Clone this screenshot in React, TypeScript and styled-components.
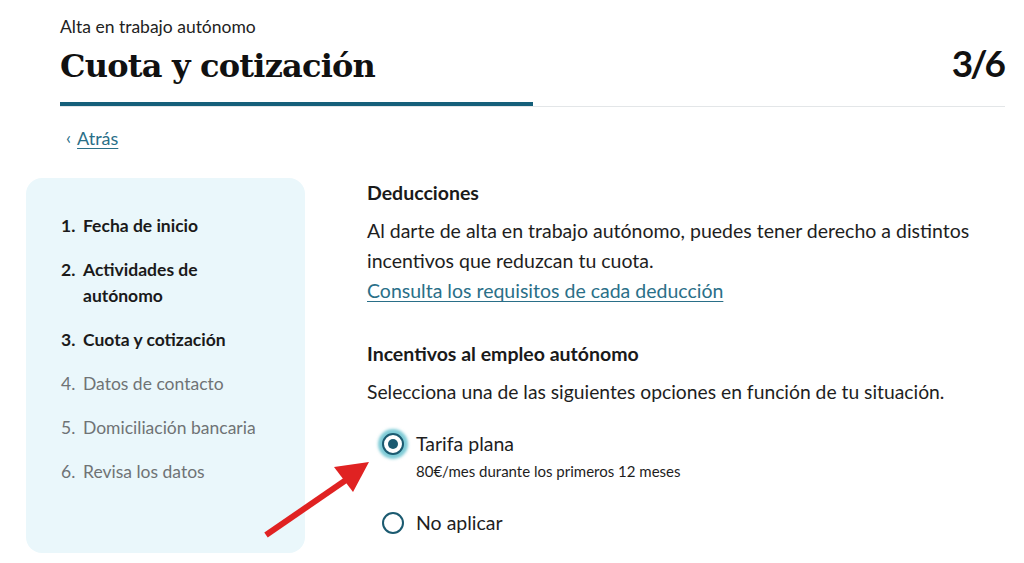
import styled, { createGlobalStyle } from "styled-components";

const GlobalStyle = createGlobalStyle`
  * { box-sizing: border-box; }
  body {
    margin: 0;
    background: #ffffff;
    font-family: Lato, "Open Sans", sans-serif;
    color: #1a1a1a;
  }
`;

const steps = [
  { n: 1, label: "Fecha de inicio", done: true },
  { n: 2, label: "Actividades de autónomo", done: true },
  { n: 3, label: "Cuota y cotización", done: true },
  { n: 4, label: "Datos de contacto", done: false },
  { n: 5, label: "Domiciliación bancaria", done: false },
  { n: 6, label: "Revisa los datos", done: false },
];

export default function App() {
  return (
    <Page>
      <GlobalStyle />
      <Header>
        <Eyebrow>Alta en trabajo autónomo</Eyebrow>
        <TitleRow>
          <Title>Cuota y cotización</Title>
          <Counter>3/6</Counter>
        </TitleRow>
        <Progress>
          <ProgressFill style={{ width: `${(3 / 6) * 100}%` }} />
        </Progress>
      </Header>

      <BackLink href="#">
        <Chevron>‹</Chevron>
        <span>Atrás</span>
      </BackLink>

      <Body>
        <Sidebar>
          <StepList>
            {steps.map((s) => (
              <Step key={s.n} $done={s.done}>
                <StepNum>{s.n}.</StepNum>
                <StepLabel $wrap={s.n === 2}>{s.label}</StepLabel>
              </Step>
            ))}
          </StepList>
        </Sidebar>

        <Content>
          <SectionTitle>Deducciones</SectionTitle>
          <Paragraph>
            Al darte de alta en trabajo autónomo, puedes tener derecho a distintos
            incentivos que reduzcan tu cuota.
            <br />
            <TextLink href="#">Consulta los requisitos de cada deducción</TextLink>
          </Paragraph>

          <SectionTitle $spaced>Incentivos al empleo autónomo</SectionTitle>
          <Paragraph $tight>
            Selecciona una de las siguientes opciones en función de tu situación.
          </Paragraph>

          <Options>
            <Option>
              <Radio $checked />
              <OptionText>
                <OptionLabel>Tarifa plana</OptionLabel>
                <OptionHint>80€/mes durante los primeros 12 meses</OptionHint>
              </OptionText>
            </Option>
            <Option>
              <Radio />
              <OptionText>
                <OptionLabel>No aplicar</OptionLabel>
              </OptionText>
            </Option>
          </Options>
        </Content>
      </Body>

      <Arrow width="120" height="90" viewBox="0 0 120 90">
        <line x1="6" y1="87" x2="86" y2="32" stroke="#e02222" strokeWidth="6" />
        <polygon points="109,14 74,19 93,44" fill="#e02222" />
      </Arrow>
    </Page>
  );
}

const Page = styled.div`
  position: relative;
  width: 1024px;
  height: 563px;
  padding: 16px 19px 0 26px;
  overflow: hidden;
`;

const Header = styled.header`
  margin-left: 34px;
`;

const Eyebrow = styled.div`
  font-size: 17.5px;
  line-height: 22px;
  color: #222;
`;

const TitleRow = styled.div`
  display: flex;
  justify-content: space-between;
  align-items: baseline;
  margin-top: 3px;
`;

const Title = styled.h1`
  margin: 0;
  font-family: "DejaVu Serif", "Liberation Serif", serif;
  font-weight: 700;
  font-size: 32px;
  line-height: 44px;
  letter-spacing: -0.8px;
  color: #111;
`;

const Counter = styled.div`
  font-size: 37px;
  font-weight: 700;
  line-height: 44px;
  letter-spacing: -3px;
  padding-right: 2px;
  color: #111;
`;

const Progress = styled.div`
  margin-top: 14px;
  height: 5px;
  border-bottom: 1px solid #e3e6e8;
`;

const ProgressFill = styled.div`
  height: 4px;
  background: #155f7a;
`;

const BackLink = styled.a`
  display: inline-flex;
  align-items: center;
  gap: 6px;
  margin: 19px 0 0 40px;
  font-size: 18px;
  line-height: 24px;
  color: #2a6f88;
  text-decoration: none;
  span {
    text-decoration: underline;
    text-underline-offset: 3px;
  }
`;

const Chevron = styled.i`
  font-style: normal;
  font-size: 18px;
  line-height: 18px;
  margin-top: -3px;
`;

const Body = styled.div`
  display: grid;
  grid-template-columns: 279px 1fr;
  column-gap: 62px;
  margin-top: 28px;
`;

const Sidebar = styled.nav`
  height: 375px;
  background: #eaf7fb;
  border-radius: 16px;
  padding: 35px 20px 0 35px;
`;

const StepList = styled.ol`
  list-style: none;
  margin: 0;
  padding: 0;
  display: flex;
  flex-direction: column;
  gap: 18px;
`;

const Step = styled.li<{ $done: boolean }>`
  display: flex;
  font-size: 17.5px;
  line-height: 26px;
  font-weight: ${(p) => (p.$done ? 700 : 400)};
  color: ${(p) => (p.$done ? "#1a1a1a" : "#6f7375")};
`;

const StepNum = styled.span`
  width: 22px;
  flex: none;
`;

const StepLabel = styled.span<{ $wrap?: boolean }>`
  max-width: ${(p) => (p.$wrap ? "150px" : "none")};
`;

const Content = styled.main`
  padding-top: 2px;
`;

const SectionTitle = styled.h2<{ $spaced?: boolean }>`
  margin: ${(p) => (p.$spaced ? "35px" : "0")} 0 0;
  font-size: 19.5px;
  font-weight: 700;
  line-height: 26px;
  color: #1a1a1a;
`;

const Paragraph = styled.p<{ $tight?: boolean }>`
  margin: 10px 0 0;
  font-size: ${(p) => (p.$tight ? "19.3px" : "19.5px")};
  line-height: 30px;
  color: #1e1e1e;
`;

const TextLink = styled.a`
  color: #2a6f88;
  text-decoration: underline;
  text-underline-offset: 3px;
`;

const Options = styled.div`
  display: flex;
  flex-direction: column;
  gap: 28px;
  margin-top: 24px;
  margin-left: 15px;
`;

const Option = styled.label`
  display: flex;
  align-items: flex-start;
  gap: 12px;
`;

const Radio = styled.span<{ $checked?: boolean }>`
  flex: none;
  width: 22px;
  height: 22px;
  margin-top: 2px;
  border-radius: 50%;
  border: 2.5px solid #1b5a70;
  background: #fff;
  display: flex;
  align-items: center;
  justify-content: center;
  box-shadow: ${(p) =>
    p.$checked ? "0 0 3px 4px rgba(20, 160, 180, 0.55)" : "none"};
  &::after {
    content: "";
    width: 10px;
    height: 10px;
    border-radius: 50%;
    background: #1b5a70;
    display: ${(p) => (p.$checked ? "block" : "none")};
  }
`;

const OptionText = styled.div`
  display: flex;
  flex-direction: column;
  gap: 3px;
`;

const OptionLabel = styled.span`
  font-size: 19.5px;
  line-height: 26px;
  color: #1e1e1e;
`;

const OptionHint = styled.span`
  font-size: 15px;
  line-height: 22px;
  color: #1e1e1e;
`;

const Arrow = styled.svg`
  position: absolute;
  left: 260px;
  top: 448px;
`;
